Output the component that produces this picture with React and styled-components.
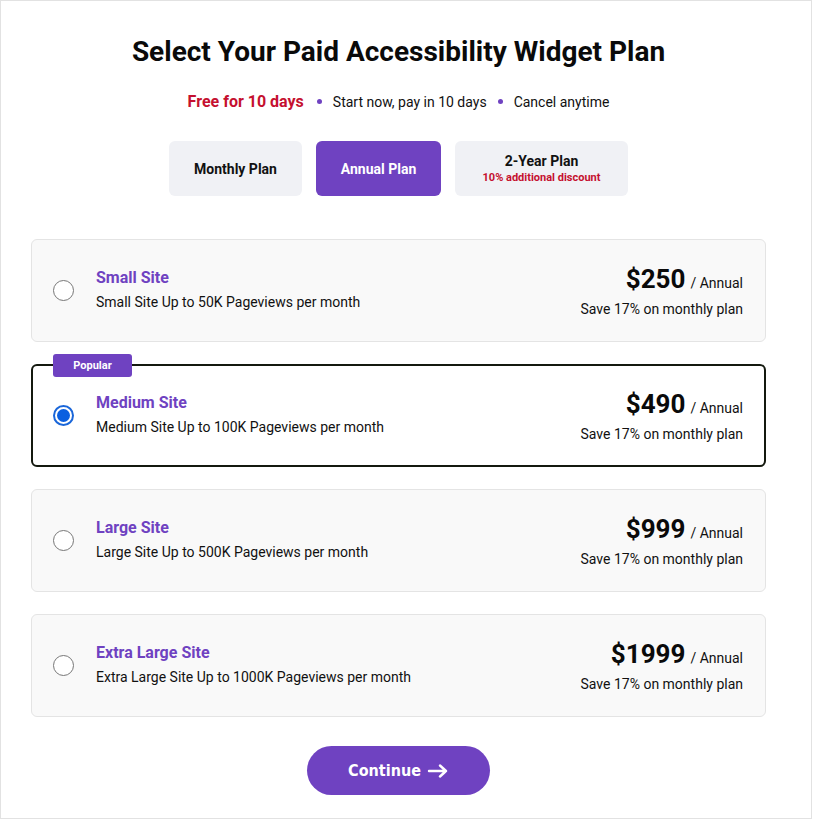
import React, { useState } from "react";
import styled, { createGlobalStyle } from "styled-components";

const GlobalStyle = createGlobalStyle`
  body {
    margin: 0;
    background: #fff;
    font-family: Roboto, "Liberation Sans", Arial, sans-serif;
    color: #111;
  }
  * { box-sizing: border-box; }
`;

const Frame = styled.div`
  width: 812px;
  height: 819px;
  border: 1px solid #e2e2e2;
  padding: 0 45px 0 30px;
`;

const Column = styled.div`
  width: 735px;
  display: flex;
  flex-direction: column;
  align-items: center;
`;

const Title = styled.h1`
  margin: 33px 0 0;
  font-size: 28px;
  font-weight: 700;
  line-height: 36px;
  color: #0a0a0a;
`;

const Perks = styled.div`
  margin-top: 22px;
  display: flex;
  align-items: center;
  gap: 11px;
  font-size: 14px;
  color: #111;
`;

const Free = styled.span`
  color: #c5102f;
  font-weight: 700;
  font-size: 16px;
  margin-right: 2px;
`;

const Dot = styled.span`
  width: 5px;
  height: 5px;
  border-radius: 50%;
  background: #6f42c1;
`;

const Tabs = styled.div`
  margin-top: 30px;
  display: flex;
  gap: 14px;
`;

const Tab = styled.button`
  height: 55px;
  width: ${(p) => p.$w}px;
  border: none;
  border-radius: 6px;
  background: ${(p) => (p.$active ? "#6f42c1" : "#f0f1f5")};
  color: ${(p) => (p.$active ? "#fff" : "#111")};
  font-family: inherit;
  font-size: 14px;
  font-weight: 700;
  display: flex;
  flex-direction: column;
  align-items: center;
  justify-content: center;
  cursor: pointer;
`;

const TabNote = styled.span`
  color: #c5102f;
  font-size: 11px;
  font-weight: 700;
  margin-top: 2px;
`;

const Cards = styled.div`
  margin-top: 43px;
  width: 100%;
  display: flex;
  flex-direction: column;
  gap: 22px;
`;

const Card = styled.label`
  position: relative;
  height: 103px;
  display: flex;
  align-items: center;
  padding: ${(p) => (p.$selected ? "0 21px 0 20px" : "0 22px 0 21px")};
  border-radius: 6px;
  background: ${(p) => (p.$selected ? "#fff" : "#f9f9f9")};
  border: ${(p) => (p.$selected ? "2px solid #14190f" : "1px solid #e4e4e4")};
  cursor: pointer;
`;

const Badge = styled.span`
  position: absolute;
  top: -12px;
  left: 20px;
  width: 79px;
  height: 23px;
  border-radius: 3px;
  background: #6f42c1;
  color: #fff;
  font-size: 11px;
  font-weight: 700;
  display: flex;
  align-items: center;
  justify-content: center;
`;

const Radio = styled.span`
  width: 21px;
  height: 21px;
  border-radius: 50%;
  flex-shrink: 0;
  border: ${(p) => (p.$on ? "2px solid #1a66d9" : "1.5px solid #777")};
  background: #fff;
  display: flex;
  align-items: center;
  justify-content: center;
  &::after {
    content: "";
    width: 13px;
    height: 13px;
    border-radius: 50%;
    background: ${(p) => (p.$on ? "#0a5fe0" : "transparent")};
  }
`;

const Info = styled.div`
  margin-left: 22px;
  flex: 1;
  margin-top: -3px;
`;

const Name = styled.div`
  color: #6f42c1;
  font-size: 16px;
  font-weight: 700;
`;

const Desc = styled.div`
  margin-top: 7px;
  font-size: 14px;
  color: #111;
`;

const Pricing = styled.div`
  text-align: right;
`;

const Price = styled.div`
  display: flex;
  align-items: baseline;
  justify-content: flex-end;
  gap: 5px;
`;

const Amount = styled.span`
  font-size: 26px;
  font-weight: 700;
  color: #0a0a0a;
`;

const Per = styled.span`
  font-size: 14px;
  color: #111;
`;

const Save = styled.div`
  margin-top: 7px;
  font-size: 14px;
  color: #111;
`;

const Continue = styled.button`
  margin-top: 29px;
  width: 183px;
  height: 49px;
  border: none;
  border-radius: 25px;
  background: #6f42c1;
  color: #fff;
  font-family: "DejaVu Sans Condensed", "DejaVu Sans", Verdana, sans-serif;
  font-size: 16px;
  font-weight: 700;
  display: flex;
  align-items: center;
  justify-content: center;
  gap: 6px;
  cursor: pointer;
`;

const plans = [
  { name: "Small Site", views: "50K", price: "$250" },
  { name: "Medium Site", views: "100K", price: "$490", popular: true },
  { name: "Large Site", views: "500K", price: "$999" },
  { name: "Extra Large Site", views: "1000K", price: "$1999" },
];

export default function App() {
  const [tab, setTab] = useState("annual");
  const [selected, setSelected] = useState(1);

  return (
    <Frame>
      <GlobalStyle />
      <Column>
        <Title>Select Your Paid Accessibility Widget Plan</Title>
        <Perks>
          <Free>Free for 10 days</Free>
          <Dot />
          <span>Start now, pay in 10 days</span>
          <Dot />
          <span>Cancel anytime</span>
        </Perks>
        <Tabs>
          <Tab $w={133} $active={tab === "monthly"} onClick={() => setTab("monthly")}>
            Monthly Plan
          </Tab>
          <Tab $w={125} $active={tab === "annual"} onClick={() => setTab("annual")}>
            Annual Plan
          </Tab>
          <Tab $w={173} $active={tab === "2year"} onClick={() => setTab("2year")}>
            2-Year Plan
            <TabNote>10% additional discount</TabNote>
          </Tab>
        </Tabs>
        <Cards>
          {plans.map((p, i) => (
            <Card key={p.name} $selected={selected === i} onClick={() => setSelected(i)}>
              {p.popular && <Badge>Popular</Badge>}
              <Radio $on={selected === i} />
              <Info>
                <Name>{p.name}</Name>
                <Desc>
                  {p.name} Up to {p.views} Pageviews per month
                </Desc>
              </Info>
              <Pricing>
                <Price>
                  <Amount>{p.price}</Amount>
                  <Per>/ Annual</Per>
                </Price>
                <Save>Save 17% on monthly plan</Save>
              </Pricing>
            </Card>
          ))}
        </Cards>
        <Continue>
          Continue
          <svg width="22" height="14" viewBox="0 0 22 14" fill="none" stroke="#fff" strokeWidth="2.4" strokeLinecap="round" strokeLinejoin="round">
            <path d="M2 7h17M13 1.5L19 7l-6 5.5" />
          </svg>
        </Continue>
      </Column>
    </Frame>
  );
}
